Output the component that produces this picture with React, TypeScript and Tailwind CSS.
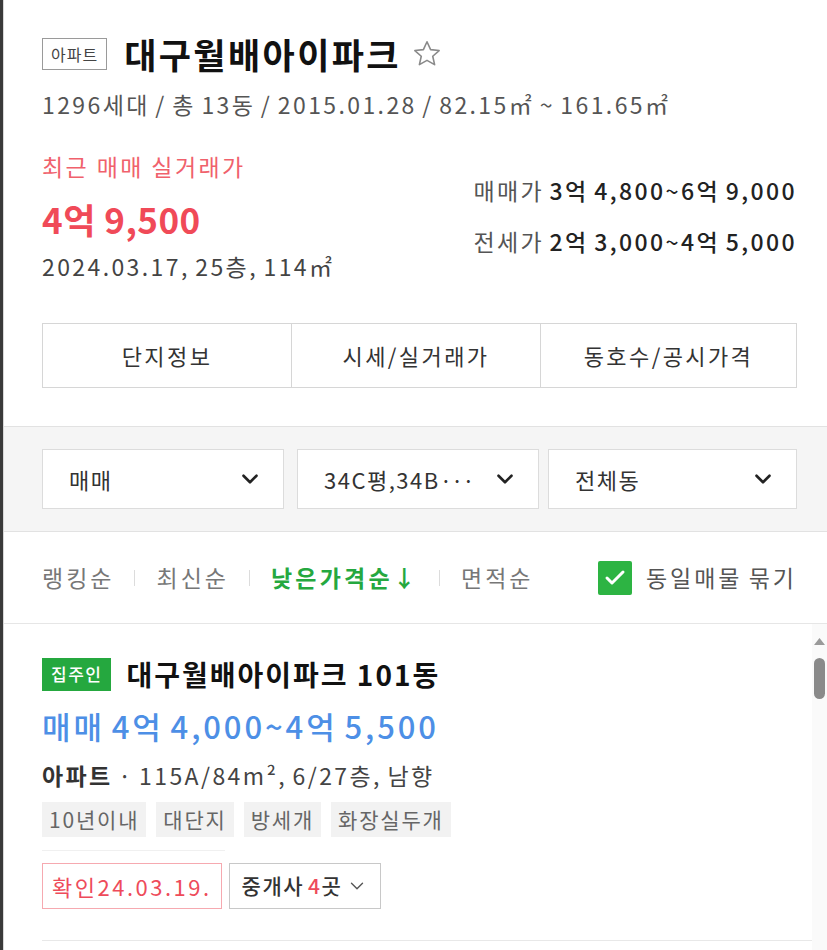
import { ChevronDown, Check } from "lucide-react";

const font = "font-['Noto_Sans_CJK_KR','Noto_Sans',sans-serif]";
const body = "text-[23px] tracking-[2.4px] [word-spacing:-2px]";

function Star() {
  return (
    <svg width="32" height="32" viewBox="0 0 24 24" className="ml-[10px]">
      <path
        d="M12 2.8l2.7 5.9 6.4.7-4.8 4.3 1.4 6.3L12 16.8l-5.7 3.2 1.4-6.3-4.8-4.3 6.4-.7z"
        fill="none"
        stroke="#8a8a8a"
        strokeWidth="1.2"
        strokeLinejoin="round"
      />
    </svg>
  );
}

function Select({ label, className }: { label: React.ReactNode; className?: string }) {
  return (
    <div
      className={`flex h-[60px] items-center justify-between border border-[#dcdcdc] bg-white pl-[26px] pr-[20px] ${className ?? ""}`}
    >
      <span className="text-[22px] tracking-[1.5px] text-[#333]">{label}</span>
      <ChevronDown size={26} strokeWidth={2.4} className="text-[#222]" />
    </div>
  );
}

function Sep() {
  return <span className="ml-[20px] mr-[21px] h-[16px] w-px bg-[#dcdcdc]" />;
}

const tags = ["10년이내", "대단지", "방세개", "화장실두개"];

export default function App() {
  return (
    <div className={`${font} flex min-h-[950px] w-[827px] bg-white`}>
      <div className="w-[3px] shrink-0 bg-[#3a3a3a]" />
      <div className="w-px shrink-0 bg-[#d8d8d8]" />
      <div className="flex min-w-0 flex-1 flex-col">
        {/* header */}
        <div className="pl-[38px] pr-[30px] pt-[34px]">
          <div className="flex h-[40px] items-center">
            <span className="flex h-[32px] items-center border border-[#9a9a9a] px-[8px] text-[16px] tracking-[1px] text-[#444]">
              아파트
            </span>
            <h1 className="ml-[17px] text-[35px] font-bold tracking-[2.4px] text-[#111]">
              대구월배아이파크
            </h1>
            <Star />
          </div>
          <p className={`mt-[16px] leading-[28px] text-[#555] ${body}`}>
            1296세대 / 총 13동 / 2015.01.28 / 82.15㎡ ~ 161.65㎡
          </p>

          <div className="mt-[34px] flex justify-between">
            <div>
              <p className={`leading-[28px] text-[#f0616c] ${body} [word-spacing:0px]`}>최근 매매 실거래가</p>
              <p className="mt-[19px] text-[35px] font-bold leading-[40px] tracking-[0.5px] text-[#f04a58]">
                4억 9,500
              </p>
              <p className={`mt-[14px] leading-[26px] text-[#444] ${body}`}>
                2024.03.17, 25층, 114㎡
              </p>
            </div>
            <div className={`mt-[23px] flex flex-col items-end gap-[21px] leading-[30px] ${body}`}>
              <p>
                <span className="text-[#555]">매매가 </span>
                <span className="font-medium text-[#222]">3억 4,800~6억 9,000</span>
              </p>
              <p>
                <span className="text-[#555]">전세가 </span>
                <span className="font-medium text-[#222]">2억 3,000~4억 5,000</span>
              </p>
            </div>
          </div>

          <div className="mt-[44px] grid h-[65px] grid-cols-[248px_249px_1fr] border border-[#d6d6d6] text-[22px] tracking-[2.4px] text-[#333]">
            <div className="flex items-center justify-center">단지정보</div>
            <div className="flex items-center justify-center border-l border-[#d6d6d6]">시세/실거래가</div>
            <div className="flex items-center justify-center border-l border-[#d6d6d6]">동호수/공시가격</div>
          </div>
        </div>

        {/* filters */}
        <div className="mt-[38px] border-y border-[#e2e2e2] bg-[#f5f5f5] pb-[22px] pl-[38px] pr-[30px] pt-[22px]">
          <div className="grid grid-cols-[242px_244px_1fr] gap-[10px]">
            <Select label="매매" />
            <Select
              label={
                <>
                  34C평,34B<span className="tracking-[-1px]">···</span>
                </>
              }
              className="ml-[3px] -mr-[1px]"
            />
            <Select label="전체동" />
          </div>
        </div>

        {/* sort */}
        <div className="flex h-[92px] items-center border-b border-[#e6e6e6] pl-[38px] pr-[30px] text-[23px] tracking-[3px] [word-spacing:-2px]">
          <span className="text-[#777]">랭킹순</span>
          <Sep />
          <span className="text-[#777]">최신순</span>
          <Sep />
          <span className="font-bold tracking-[3.2px] text-[#25a83f]">낮은가격순↓</span>
          <Sep />
          <span className="text-[#777]">면적순</span>
          <div className="ml-auto flex items-center">
            <span className="flex h-[34px] w-[34px] items-center justify-center rounded-[2px] bg-[#2db443]">
              <Check size={24} strokeWidth={3} className="text-white" />
            </span>
            <span className="ml-[14px] text-[#555]">동일매물 묶기</span>
          </div>
        </div>

        {/* list */}
        <div className="flex flex-1">
          <div className="min-w-0 flex-1 pl-[38px] pt-[33px]">
            <div className="flex h-[34px] items-center">
              <span className="flex h-[33px] items-center bg-[#25a83f] px-[9px] text-[17px] font-medium tracking-[1.5px] text-white">
                집주인
              </span>
              <span className="ml-[15px] text-[28px] font-bold tracking-[2px] text-[#111]">
                대구월배아이파크 101동
              </span>
            </div>
            <p className="mt-[17px] text-[31px] font-medium leading-[36px] tracking-[2.9px] text-[#4d8fe6] [word-spacing:-3px]">
              매매 4억 4,000~4억 5,500
            </p>
            <p className={`mt-[17px] leading-[28px] text-[#444] ${body}`}>
              <span className="font-bold text-[#333]">아파트</span> · 115A/84m², 6/27층, 남향
            </p>
            <div className="mt-[13px] flex gap-[10px]">
              {tags.map((t) => (
                <span
                  key={t}
                  className="flex h-[35px] items-center bg-[#f2f2f2] px-[7px] text-[21px] tracking-[1.8px] text-[#666]"
                >
                  {t}
                </span>
              ))}
            </div>
            <div className="mt-[13px] h-px w-[183px] bg-[#f0f0f0]" />
            <div className="mt-[12px] flex gap-[7px]">
              <span className="flex h-[46px] items-center border border-[#f6a9b0] px-[9px] text-[22px] tracking-[2.5px] text-[#ee4b5a]">
                확인24.03.19.
              </span>
              <span className="flex h-[46px] items-center border border-[#c8c8c8] px-[12px] text-[21px] font-medium tracking-[1.5px] text-[#333]">
                중개사 <span className="ml-[4px] text-[#ee4b5a]">4</span>곳
                <ChevronDown size={22} strokeWidth={1.5} className="ml-[4px] text-[#555]" />
              </span>
            </div>
            <div className="mt-[31px] h-px bg-[#e8e8e8]" />
          </div>
          <div className="relative w-[15px] shrink-0 bg-[#fafafa]">
            <svg width="11" height="7" viewBox="0 0 11 7" className="absolute left-[2px] top-[14px]">
              <path d="M5.5 0L11 7H0z" fill="#9a9a9a" />
            </svg>
            <div className="absolute left-[2px] top-[34px] h-[41px] w-[11px] rounded-full bg-[#8a8a8a]" />
          </div>
        </div>
      </div>
    </div>
  );
}
